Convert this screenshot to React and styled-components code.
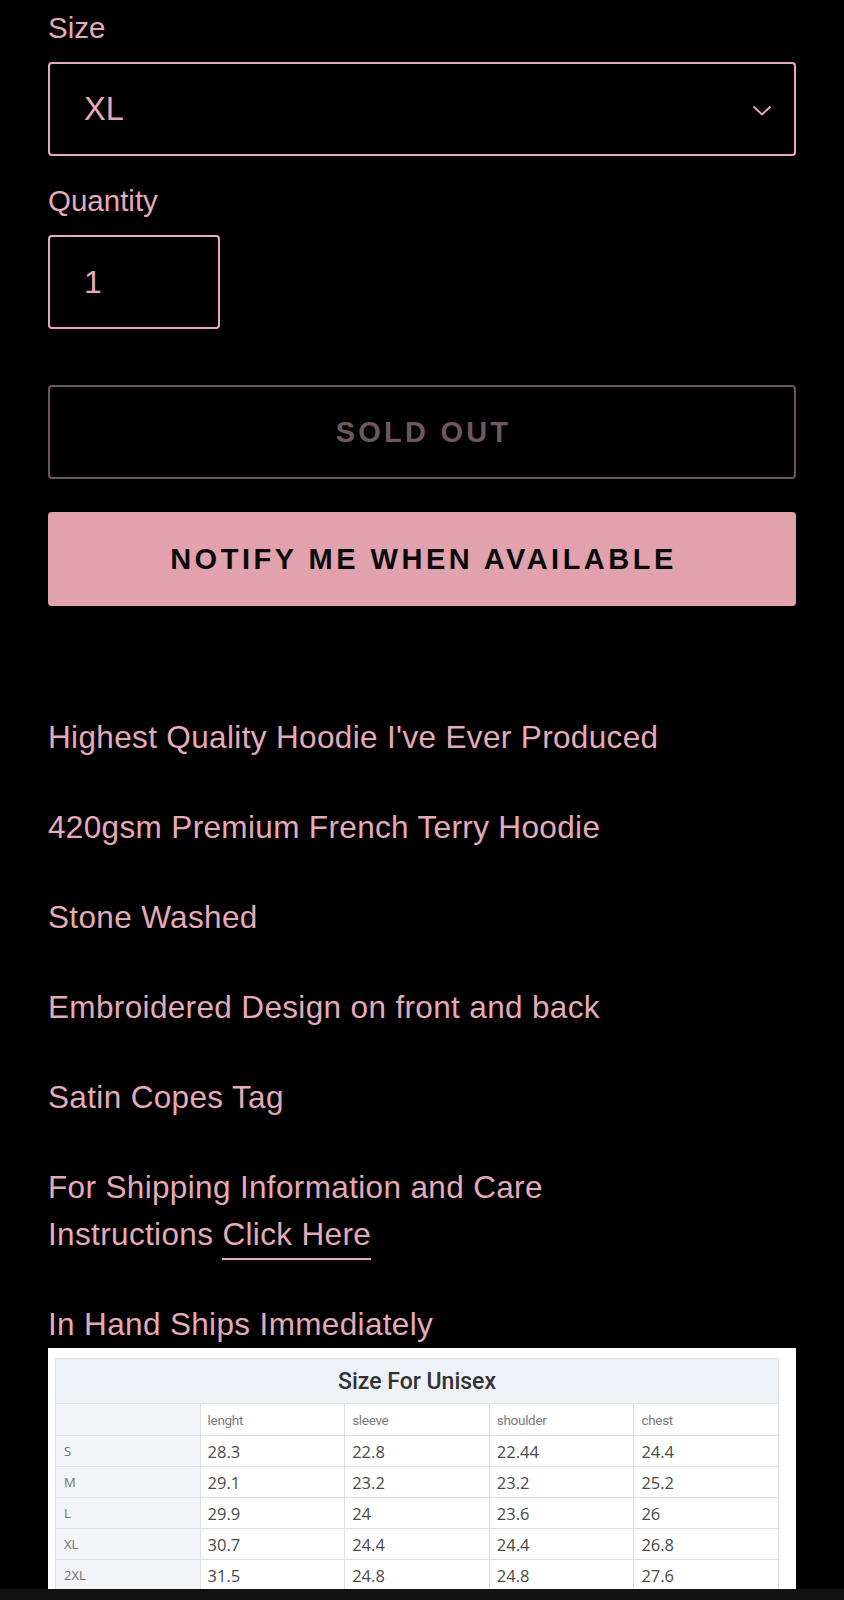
import styled, { createGlobalStyle } from 'styled-components';

const pink = '#e5aab7';

const GlobalStyle = createGlobalStyle`
  html, body {
    margin: 0;
    padding: 0;
    background: #000;
  }
  body {
    height: 1600px;
    overflow: hidden;
    font-family: 'Liberation Sans', Arial, Helvetica, sans-serif;
    color: ${pink};
  }
`;

const sizes = [
  { size: 'S', length: '28.3', sleeve: '22.8', shoulder: '22.44', chest: '24.4' },
  { size: 'M', length: '29.1', sleeve: '23.2', shoulder: '23.2', chest: '25.2' },
  { size: 'L', length: '29.9', sleeve: '24', shoulder: '23.6', chest: '26' },
  { size: 'XL', length: '30.7', sleeve: '24.4', shoulder: '24.4', chest: '26.8' },
  { size: '2XL', length: '31.5', sleeve: '24.8', shoulder: '24.8', chest: '27.6' },
];

function Chevron() {
  return (
    <svg width="20" height="11" viewBox="0 0 20 11" fill="none">
      <path d="M1.5 1.5 L10 9.5 L18.5 1.5" stroke={pink} strokeWidth="2" />
    </svg>
  );
}

export default function App() {
  return (
    <Page>
      <GlobalStyle />
      <Field>
        <Label>Size</Label>
        <SelectBox>
          <span>XL</span>
          <Chevron />
        </SelectBox>
      </Field>
      <Field $spaced>
        <Label>Quantity</Label>
        <QtyBox>1</QtyBox>
      </Field>

      <SoldOutButton disabled>Sold out</SoldOutButton>
      <NotifyButton>Notify me when available</NotifyButton>

      <Description>
        <p>Highest Quality Hoodie I've Ever Produced</p>
        <p>420gsm Premium French Terry Hoodie</p>
        <p>Stone Washed</p>
        <p>Embroidered Design on front and back</p>
        <p>Satin Copes Tag</p>
        <p>
          For Shipping Information and Care
          <br />
          Instructions <Link href="#">Click Here</Link>
        </p>
        <p>In Hand Ships Immediately</p>
      </Description>

      <ChartFrame>
        <SizeTable>
          <thead>
            <tr>
              <TitleCell colSpan={5}>Size For Unisex</TitleCell>
            </tr>
          </thead>
          <tbody>
            <tr>
              <SideCell />
              <HeadCell>lenght</HeadCell>
              <HeadCell>sleeve</HeadCell>
              <HeadCell>shoulder</HeadCell>
              <HeadCell>chest</HeadCell>
            </tr>
            {sizes.map(row => (
              <tr key={row.size}>
                <SideCell>{row.size}</SideCell>
                <ValueCell>{row.length}</ValueCell>
                <ValueCell>{row.sleeve}</ValueCell>
                <ValueCell>{row.shoulder}</ValueCell>
                <ValueCell>{row.chest}</ValueCell>
              </tr>
            ))}
          </tbody>
        </SizeTable>
      </ChartFrame>
      <BottomBar />
    </Page>
  );
}

const Page = styled.div`
  padding: 5px 48px 0;
  display: flex;
  flex-direction: column;
`;

const Field = styled.div`
  display: flex;
  flex-direction: column;
  align-items: flex-start;
  margin-top: ${p => (p.$spaced ? '22px' : '0')};
`;

const Label = styled.label`
  font-size: 29.5px;
  line-height: 45px;
  margin-bottom: 12px;
`;

const SelectBox = styled.div`
  box-sizing: border-box;
  width: 100%;
  height: 94px;
  border: 2px solid ${pink};
  border-radius: 4px;
  display: flex;
  align-items: center;
  justify-content: space-between;
  padding: 0 22px 0 34px;
  font-size: 32.5px;
  svg {
    margin-top: 2px;
  }
`;

const QtyBox = styled.div`
  box-sizing: border-box;
  width: 172px;
  height: 94px;
  border: 2px solid ${pink};
  border-radius: 4px;
  display: flex;
  align-items: center;
  padding-left: 34px;
  font-size: 32px;
`;

const ActionButton = styled.button`
  box-sizing: border-box;
  width: 100%;
  height: 94px;
  border-radius: 4px;
  font-family: 'Liberation Sans', Arial, sans-serif;
  font-weight: bold;
  font-size: 29px;
  letter-spacing: ${p => p.$spacing || '3.2px'};
  text-transform: uppercase;
  padding: 0 0 0 3px;
`;

const SoldOutButton = styled(ActionButton)`
  margin-top: 56px;
  background: transparent;
  border: 2px solid #6b555b;
  color: #6d585e;
`;

const NotifyButton = styled(ActionButton).attrs({ $spacing: '3.5px' })`
  margin-top: 33px;
  background: #e1a2ad;
  border: none;
  color: #0a0a0a;
`;

const Description = styled.div`
  margin-top: 108px;
  p {
    margin: 0 0 43px;
    font-size: 31.5px;
    line-height: 47px;
    letter-spacing: 0.35px;
  }
  p:last-child {
    margin-bottom: 0;
  }
`;

const Link = styled.a`
  color: ${pink};
  text-decoration: none;
  border-bottom: 2px solid ${pink};
  padding-bottom: 6px;
`;

const ChartFrame = styled.div`
  background: #fff;
  height: 241px;
  padding: 10px 17px 0 7px;
  box-sizing: border-box;
  overflow: hidden;
`;

const SizeTable = styled.table`
  width: 100%;
  border-collapse: collapse;
  table-layout: fixed;
  td {
    border: 1px solid #dde0e4;
    box-sizing: border-box;
  }
`;

const TitleCell = styled.td`
  height: 45px;
  background: #eef1f5;
  text-align: center;
  font-family: Roboto, 'Noto Sans', sans-serif;
  font-weight: 500;
  font-size: 23px;
  color: #333;
  padding: 0;
  border: 1px solid #dde0e4;
`;

const SideCell = styled.td`
  width: 142px;
  height: 31px;
  background: #f2f4f7;
  padding: 0 0 0 8px;
  font-family: 'Open Sans', sans-serif;
  font-size: 13px;
  color: #707070;
`;

const HeadCell = styled.td`
  height: 32px;
  padding: 0 0 0 7px;
  font-family: Roboto, sans-serif;
  font-size: 13.5px;
  color: #7a7a7a;
  letter-spacing: -0.3px;
  background: #fff;
`;

const ValueCell = styled.td`
  height: 31px;
  padding: 0 0 0 7px;
  font-family: 'Open Sans', sans-serif;
  font-size: 16.5px;
  color: #4a4a4a;
  background: #fff;
`;

const BottomBar = styled.div`
  position: fixed;
  left: 0;
  right: 0;
  bottom: 0;
  height: 11px;
  background: #121212;
`;
